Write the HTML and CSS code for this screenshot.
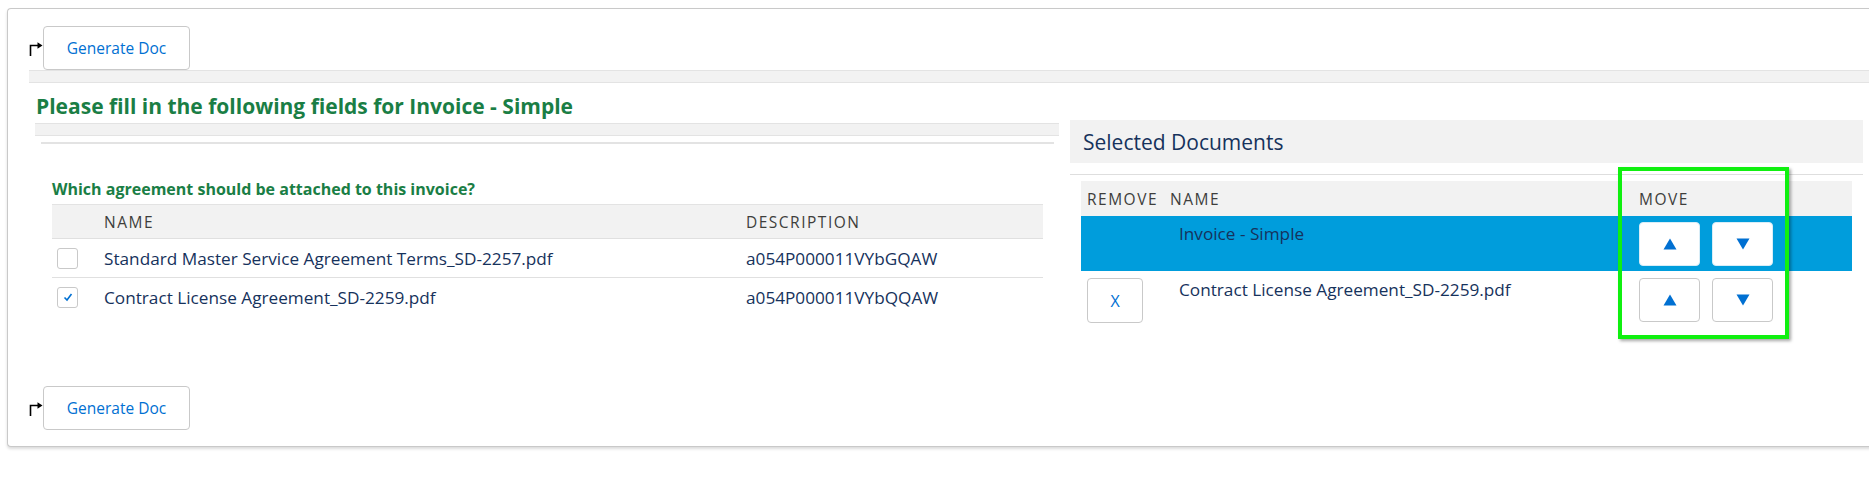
FILE: index.html
```html
<!DOCTYPE html>
<html>
<head>
<meta charset="utf-8">
<link rel="stylesheet" href="styles.css">
</head>
<body>
<div class="card">
  <div class="action action-top">
    <svg class="arrow" viewBox="0 0 14 15" width="14" height="15"><path d="M1.5 15 V4.5 H9" fill="none" stroke="#000" stroke-width="1.6"/><polygon points="8.5,1.2 13.5,4.5 8.5,7.8" fill="#000"/></svg>
    <button class="btn btn-generate">Generate Doc</button>
  </div>
  <div class="band band-top"></div>
  <h2 class="page-title">Please fill in the following fields for Invoice - Simple</h2>
  <div class="columns">
    <div class="col-left">
      <div class="band band-left"></div>
      <div class="rule rule-left"></div>
      <div class="question">Which agreement should be attached to this invoice?</div>
      <table class="grid grid-left">
        <thead>
          <tr>
            <th class="c-check"></th>
            <th class="c-name">NAME</th>
            <th class="c-desc">DESCRIPTION</th>
          </tr>
        </thead>
        <tbody>
          <tr>
            <td class="c-check"><span class="checkbox"></span></td>
            <td class="c-name">Standard Master Service Agreement Terms_SD-2257.pdf</td>
            <td class="c-desc">a054P000011VYbGQAW</td>
          </tr>
          <tr class="last">
            <td class="c-check"><span class="checkbox checked"><svg viewBox="0 0 12 12" width="12" height="12"><path d="M2.5 6.5 L5 9 L9.5 3" fill="none" stroke="#0070d2" stroke-width="1.6"/></svg></span></td>
            <td class="c-name">Contract License Agreement_SD-2259.pdf</td>
            <td class="c-desc">a054P000011VYbQQAW</td>
          </tr>
        </tbody>
      </table>
    </div>
    <div class="col-right">
      <div class="panel-head">Selected Documents</div>
      <div class="rule rule-right"></div>
      <table class="grid grid-right">
        <thead>
          <tr>
            <th class="r-remove">REMOVE</th>
            <th class="r-name">NAME</th>
            <th class="r-move">MOVE</th>
          </tr>
        </thead>
        <tbody>
          <tr class="selected">
            <td class="r-remove"></td>
            <td class="r-name">Invoice - Simple</td>
            <td class="r-move">
              <div class="move-btns">
                <button class="btn btn-move"><svg viewBox="0 0 14 12" width="14" height="12"><polygon points="7,0.5 13.5,11.5 0.5,11.5" fill="#0070d2"/></svg></button>
                <button class="btn btn-move"><svg viewBox="0 0 14 12" width="14" height="12"><polygon points="0.5,0.5 13.5,0.5 7,11.5" fill="#0070d2"/></svg></button>
              </div>
            </td>
          </tr>
          <tr>
            <td class="r-remove"><button class="btn btn-x">X</button></td>
            <td class="r-name">Contract License Agreement_SD-2259.pdf</td>
            <td class="r-move">
              <div class="move-btns">
                <button class="btn btn-move"><svg viewBox="0 0 14 12" width="14" height="12"><polygon points="7,0.5 13.5,11.5 0.5,11.5" fill="#0070d2"/></svg></button>
                <button class="btn btn-move"><svg viewBox="0 0 14 12" width="14" height="12"><polygon points="0.5,0.5 13.5,0.5 7,11.5" fill="#0070d2"/></svg></button>
              </div>
            </td>
          </tr>
        </tbody>
      </table>
    </div>
  </div>
  <div class="action action-bottom">
    <svg class="arrow" viewBox="0 0 14 15" width="14" height="15"><path d="M1.5 15 V4.5 H9" fill="none" stroke="#000" stroke-width="1.6"/><polygon points="8.5,1.2 13.5,4.5 8.5,7.8" fill="#000"/></svg>
    <button class="btn btn-generate">Generate Doc</button>
  </div>
</div>
<div class="highlight"></div>
</body>
</html>
```
FILE: styles.css
```css
html, body {
  margin: 0;
  padding: 0;
  background: #ffffff;
  overflow: hidden;
}
body {
  font-family: "Open Sans", "Liberation Sans", sans-serif;
  color: #16325c;
  width: 1869px;
  height: 480px;
  position: relative;
}
.card {
  box-sizing: border-box;
  margin: 8px 0 0 7px;
  width: 1880px;
  height: 439px;
  border: 1px solid #c9c9c9;
  border-right: 0;
  border-radius: 4px 0 0 4px;
  box-shadow: 0 2px 3px rgba(0, 0, 0, 0.14);
  display: flex;
  flex-direction: column;
  background: #fff;
}
.action {
  display: flex;
  align-items: center;
  margin-left: 21px;
}
.action-top {
  margin-top: 17px;
}
.action-bottom {
  margin-top: auto;
  margin-bottom: 16px;
}
.arrow {
  display: block;
  flex: none;
  margin-top: 1px;
}
.btn {
  box-sizing: border-box;
  background: #fff;
  border: 1px solid #c9c9c9;
  border-radius: 4px;
  font-family: "Open Sans", "Liberation Sans", sans-serif;
  color: #0070d2;
  padding: 0;
  margin: 0;
  display: flex;
  align-items: center;
  justify-content: center;
}
.btn-generate {
  width: 147px;
  height: 44px;
  font-size: 15.5px;
}
.band {
  box-sizing: border-box;
  height: 13px;
  background: #f2f2f2;
  border-top: 1px solid #e3e3e3;
  border-bottom: 1px solid #e3e3e3;
}
.band-top {
  margin-left: 21px;
  margin-top: 0;
}
.page-title {
  margin: 10px 0 0 28px;
  font-size: 21px;
  line-height: 26px;
  font-weight: 700;
  color: #1a7e45;
}
.columns {
  display: flex;
  gap: 11px;
  margin-left: 27px;
  margin-top: 1px;
}
.col-left {
  width: 1024px;
  padding-top: 3px;
}
.col-right {
  width: 793px;
}
.rule {
  background: #e3e3e3;
}
.rule-left {
  height: 2px;
  margin: 6px 5px 0 6px;
}
.question {
  margin: 34px 0 0 17px;
  font-size: 16px;
  line-height: 22px;
  font-weight: 700;
  color: #1a7e45;
}
.grid {
  border-collapse: collapse;
  font-size: 17.2px;
  color: #16325c;
}
.grid th {
  background: #f2f2f2;
  font-weight: 400;
  font-size: 15.5px;
  letter-spacing: 1.5px;
  color: #3e3e3c;
  text-align: left;
  padding: 0 0 0 6px;
}
.grid-left {
  margin: 4px 0 0 17px;
  width: 991px;
  table-layout: fixed;
}
.grid-left thead tr {
  height: 34px;
  border-top: 1px solid #e3e3e3;
  border-bottom: 1px solid #e0e0e0;
}
.grid-left tbody tr {
  height: 39px;
  border-bottom: 1px solid #e0e0e0;
}
.grid-left tbody tr.last {
  border-bottom: 0;
}
.grid-left td {
  padding: 0 0 0 6px;
  vertical-align: middle;
}
.grid-left .c-check {
  width: 41px;
  padding-left: 5px;
}
.grid-left .c-name {
  width: 636px;
}
.checkbox {
  box-sizing: border-box;
  display: flex;
  align-items: center;
  justify-content: center;
  width: 21px;
  height: 21px;
  border: 1px solid #c9c9c9;
  border-radius: 3px;
  background: #fff;
}
.panel-head {
  box-sizing: border-box;
  height: 43px;
  background: #f2f2f2;
  padding-left: 13px;
  display: flex;
  align-items: center;
  font-size: 21px;
  color: #16325c;
}
.rule-right {
  height: 1px;
  margin-top: 11px;
  background: #dedede;
}
.grid-right {
  margin: 6px 0 0 11px;
  width: 771px;
  table-layout: fixed;
}
.grid-right thead tr {
  height: 35px;
}
.grid-right .r-remove {
  width: 77px;
}
.grid-right .r-move {
  width: 213px;
}
.grid-right td {
  vertical-align: top;
  padding: 0;
}
.grid-right td.r-remove {
  padding: 7px 0 0 6px;
}
.grid-right td.r-name {
  padding: 7px 0 0 15px;
  line-height: 22px;
}
.grid-right tbody tr:last-child td.r-name {
  padding-top: 8px;
}
.grid-right td.r-move {
  padding: 6px 0 0 6px;
}
.grid-right tbody tr {
  height: 55px;
}
.grid-right tbody tr:last-child {
  height: 56px;
}
.grid-right tr.selected td {
  background: #009ddc;
}
.grid-right tbody tr:last-child td.r-move {
  padding-top: 7px;
}
.move-btns {
  display: flex;
  gap: 12px;
}
.btn-move {
  width: 61px;
  height: 44px;
}
.selected .btn-move {
  border-color: #d8edf7;
}
.btn-x {
  width: 56px;
  height: 45px;
  font-size: 16px;
}
.highlight {
  position: absolute;
  left: 1618px;
  top: 167px;
  width: 171px;
  height: 172px;
  box-sizing: border-box;
  border: 4px solid #10f010;
  box-shadow: 2px 2px 3px rgba(0, 0, 0, 0.35);
}
```
